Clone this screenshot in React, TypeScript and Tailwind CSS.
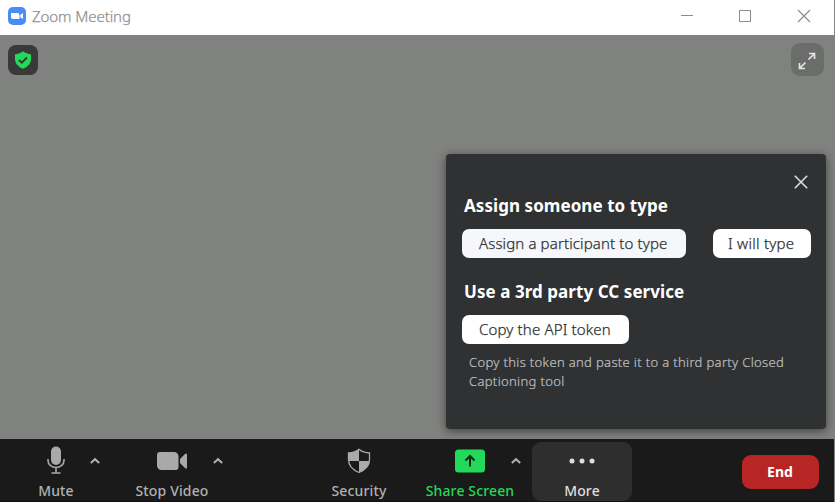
import type { ReactNode } from "react";

const Caret = () => (
  <svg width="12" height="8" viewBox="0 0 12 8" fill="none" className="mt-[18px] shrink-0">
    <path d="M1.800 6 6 2.200 10.200 6" stroke="#b0b0b0" strokeWidth="2" />
  </svg>
);

function Tool({ icon, label, className }: { icon: ReactNode; label: string; className: string }) {
  return (
    <button className={`flex h-[62px] shrink-0 flex-col items-center whitespace-nowrap text-[14px] leading-5 font-medium tracking-[0.14px] ${className}`}>
      <span className="flex h-[44px] shrink-0 items-center justify-center">{icon}</span>
      <span className="-mt-[2px]">{label}</span>
    </button>
  );
}

function TitleBar() {
  return (
    <header className="flex h-[35px] shrink-0 items-center border-r border-[#8a8a8a] bg-white pl-2">
      <svg width="18" height="18" viewBox="0 0 18 18" className="-mt-[3px]">
        <rect width="18" height="18" rx="5" fill="#4a8cf7" />
        <path d="M3 6h6.500a2 2 0 0 1 2 2v4H5a2 2 0 0 1-2-2zM12.300 8l2.700-2v6l-2.700-1.800z" fill="#fff" />
      </svg>
      <h1 className="-mt-[3px] ml-[6px] text-[15px] leading-5 font-light tracking-[-0.08px] text-[#909090] [-webkit-text-stroke:0.25px_#909090]">Zoom Meeting</h1>
      <svg width="132" height="14" viewBox="0 0 132 14" fill="none" stroke="#8b8b8b" className="-mt-[3px] mr-[22px] ml-auto">
        <path d="M1 6.500h12M59.500 1.500h11v11h-11z" />
        <path d="m118 1 12 12M130 1l-12 12" strokeWidth="1.200" />
      </svg>
    </header>
  );
}

function CaptionPanel() {
  return (
    <section className="mt-[119px] mr-[9px] h-[275px] w-[380px] rounded-[4px] bg-[#303133] pl-4 shadow-[0_2px_10px_rgba(0,0,0,0.5)]">
      <div className="flex h-[42px] justify-end pt-[21px] pr-[18px]">
        <svg width="14" height="14" viewBox="0 0 14 14" stroke="#dedede" strokeWidth="1.600" fill="none">
          <path d="m.8.8 12.400 12.400M13.200.8.8 13.200" />
        </svg>
      </div>
      <h2 className="ml-[2px] h-[33px] text-[17px] leading-5 font-bold tracking-[0.06px] text-white">Assign someone to type</h2>
      <div className="flex gap-[27px]">
        <button className="h-[29px] w-[224px] rounded-[7px] bg-[#f5f7fa] pl-[17px] text-left text-[15px] leading-[29px] font-light tracking-[0.13px] whitespace-nowrap text-[#303133] [-webkit-text-stroke:0.25px_#303133]">Assign a participant to type</button>
        <button className="h-[29px] w-[98px] rounded-[7px] bg-white pl-[15px] text-left text-[15px] leading-[29px] font-light tracking-[0.27px] whitespace-nowrap text-[#303133] [-webkit-text-stroke:0.25px_#303133]">I will type</button>
      </div>
      <h2 className="mt-[24px] ml-[2px] h-[33px] text-[17px] leading-5 font-bold tracking-[0.06px] text-white">Use a 3rd party CC service</h2>
      <button className="block h-[29px] w-[167px] rounded-[7px] bg-white pl-[17px] text-left text-[15px] leading-[29px] font-light tracking-[0.15px] whitespace-nowrap text-[#303133] [-webkit-text-stroke:0.25px_#303133]">Copy the API token</button>
      <p className="mt-[9px] ml-[7px] text-[13px] leading-[19px] font-light tracking-[0.34px] whitespace-nowrap text-[#bfc0c1] [-webkit-text-stroke:0.2px_#bfc0c1]">
        Copy this token and paste it to a third party Closed
        <br />
        Captioning tool
      </p>
    </section>
  );
}

export default function App() {
  return (
    <div className="flex h-[502px] w-[835px] flex-col overflow-hidden bg-[#80827f] font-['Noto_Sans','Open_Sans',sans-serif]">
      <TitleBar />
      <main className="relative flex h-[404px] shrink-0 items-start justify-end">
        <div className="absolute top-[10px] left-2 flex size-[30px] items-center justify-center rounded-[8px] bg-[#393939]">
          <svg width="18" height="20" viewBox="0 0 18 20" fill="none">
            <path d="M9 1.200C6.800 3 4.200 4 1 4.200V9c0 4.500 2.800 7.500 8 9.800 5.200-2.300 8-5.300 8-9.800V4.200C13.800 4 11.200 3 9 1.200Z" fill="#23d959" />
            <path d="m5 10 2.800 2.700L13 7.500" stroke="#303630" strokeWidth="1.800" />
          </svg>
        </div>
        <div className="absolute top-2 right-[11px] flex size-[33px] items-center justify-center rounded-[9px] bg-[#6b6d6b] pt-[3px] pr-[2px]">
          <svg width="18" height="18" viewBox="0 0 18 18" fill="none" stroke="#e4e4e4" strokeWidth="1.700">
            <path d="M11 1.500h5.500V7M16.500 1.500l-6 6M1.500 11v5.500H7M1.500 16.500l6-6" />
          </svg>
        </div>
        <CaptionPanel />
      </main>
      <footer className="mr-px flex h-[63px] shrink-0 items-start border-b border-[#111] bg-[#1a1a1a] text-[#b0b0b0]">
        <Tool
          className="ml-[21px] w-[70px]"
          label="Mute"
          icon={
            <svg width="18" height="28" viewBox="0 0 18 28" fill="none" stroke="#a9a9a9" strokeWidth="1.600" className="-mt-[2px]">
              <rect x="4" y="0.500" width="10" height="18.500" rx="5" fill="#a9a9a9" stroke="none" />
              <path d="M1 13v1.500a8 7 0 0 0 16 0V13M9 21.500V27M4.500 27h9" />
            </svg>
          }
        />
        <span className="-ml-[2px]"><Caret /></span>
        <Tool
          className="ml-[21px] w-[100px]"
          label="Stop Video"
          icon={
            <svg width="30" height="18" viewBox="0 0 30 18" fill="#a9a9a9">
              <path d="M3 0h14a4.500 4.500 0 0 1 4.500 4.500V15a3 3 0 0 1-3 3h-14A4.500 4.500 0 0 1 0 13.500V3a3 3 0 0 1 3-3ZM23 7l5-5c1-.8 2-.8 2 .3v13.400c0 1.100-1 1.100-2 .3l-5-5Z" />
            </svg>
          }
        />
        <span className="-ml-[10px]"><Caret /></span>
        <Tool
          className="ml-[95px] w-[80px]"
          label="Security"
          icon={
            <svg width="24" height="26" viewBox="0 0 24 26" fill="none">
              <path d="M12 1.300C9.500 3.500 5.500 4.900 1.500 5v6.800c0 6.200 3.800 9.900 10.500 12.700 6.700-2.800 10.500-6.500 10.500-12.700V5C18.500 4.900 14.500 3.500 12 1.300Z" stroke="#a9a9a9" strokeWidth="1.300" />
              <path d="M12 1.300V13H1.500V5C5.500 4.900 9.500 3.500 12 1.300ZM12 13h10.500c-.4 5.500-4.200 8.800-10.500 11.500Z" fill="#a9a9a9" />
            </svg>
          }
        />
        <Tool
          className="ml-[21px] w-[100px] text-[#23d959]"
          label="Share Screen"
          icon={
            <svg width="30" height="24" viewBox="0 0 30 24" fill="none">
              <rect y="0.500" width="30" height="23" rx="3.500" fill="#23d959" />
              <path d="M15 17.500V8M10.500 11.500 15 7l4.500 4.500" stroke="#102a17" strokeWidth="2" />
            </svg>
          }
        />
        <span className="-ml-[10px]"><Caret /></span>
        <div className="mt-[3px] ml-[10px] h-[59px] w-[100px] overflow-hidden rounded-[9px] bg-[#2e2e2e]">
          <Tool
            className="-mt-[3px] w-[100px] text-[#dedede]"
            label="More"
            icon={
              <svg width="26" height="6" viewBox="0 0 26 6" fill="#dedede">
                <circle cx="3" cy="3" r="2.500" />
                <circle cx="13" cy="3" r="2.500" />
                <circle cx="23" cy="3" r="2.500" />
              </svg>
            }
          />
        </div>
        <button className="mt-4 ml-[110px] h-[34px] w-[77px] rounded-[9px] bg-[#b72525] pr-px text-[14px] leading-[34px] font-bold text-white">End</button>
      </footer>
    </div>
  );
}
